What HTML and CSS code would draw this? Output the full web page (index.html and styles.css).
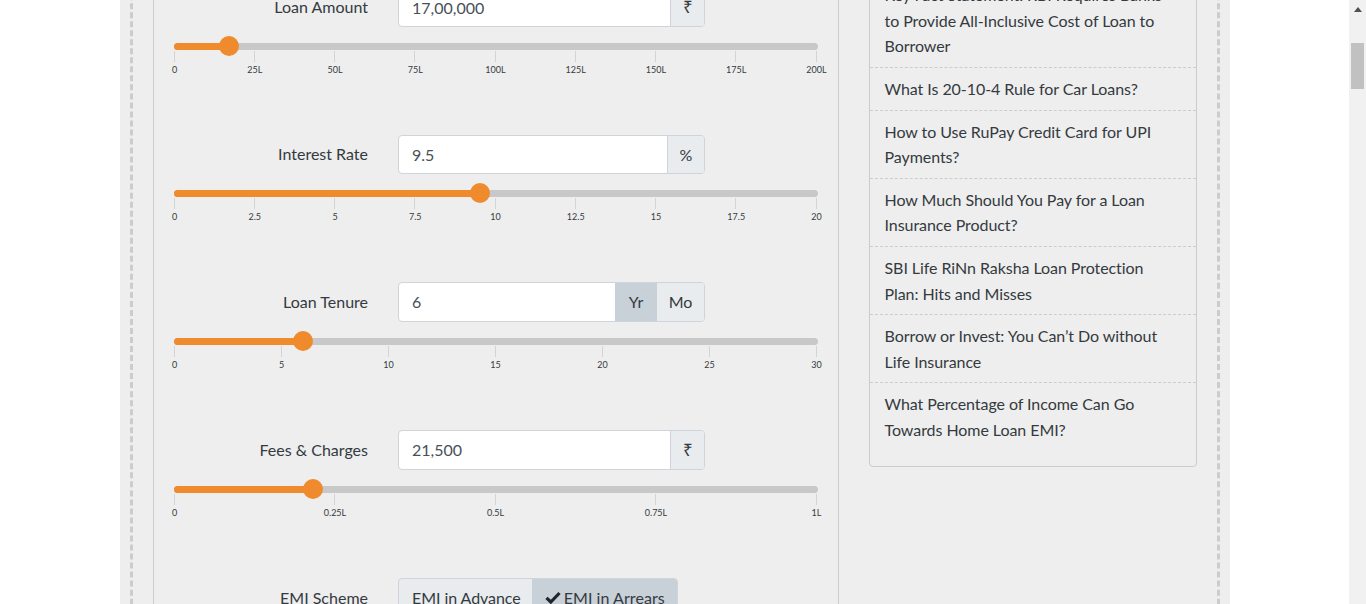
FILE: index.html
```html
<!DOCTYPE html>
<html lang="en">
<head>
    <meta charset="UTF-8">
    <meta name="viewport" content="width=device-width, initial-scale=1.0">
    <title>EMI Calculator</title>
    <link rel="stylesheet" href="styles.css">
</head>
<body>
    <div class="window">
        <div class="page">
            <div class="dashed-box">
                <main class="calc-card">
                    <section class="calc-row">
                        <div class="field">
                            <label class="field-label">Loan Amount</label>
                            <div class="input-group">
                                <span class="input-value">17,00,000</span>
                                <span class="addon rupee">₹</span>
                            </div>
                        </div>
                        <div class="slider">
                            <div class="track"><div class="fill" style="width: 8.5%"></div><span class="handle" style="left: 8.5%"></span></div>
                            <div class="scale">
                                <div class="tick">0</div><div class="tick">25L</div><div class="tick">50L</div><div class="tick">75L</div><div class="tick">100L</div><div class="tick">125L</div><div class="tick">150L</div><div class="tick">175L</div><div class="tick">200L</div>
                            </div>
                        </div>
                    </section>
                    <section class="calc-row">
                        <div class="field">
                            <label class="field-label">Interest Rate</label>
                            <div class="input-group">
                                <span class="input-value">9.5</span>
                                <span class="addon percent">%</span>
                            </div>
                        </div>
                        <div class="slider">
                            <div class="track"><div class="fill" style="width: 47.5%"></div><span class="handle" style="left: 47.5%"></span></div>
                            <div class="scale">
                                <div class="tick">0</div><div class="tick">2.5</div><div class="tick">5</div><div class="tick">7.5</div><div class="tick">10</div><div class="tick">12.5</div><div class="tick">15</div><div class="tick">17.5</div><div class="tick">20</div>
                            </div>
                        </div>
                    </section>
                    <section class="calc-row">
                        <div class="field">
                            <label class="field-label">Loan Tenure</label>
                            <div class="input-group tall">
                                <span class="input-value">6</span>
                                <span class="addon active unit">Yr</span>
                                <span class="addon unit">Mo</span>
                            </div>
                        </div>
                        <div class="slider">
                            <div class="track"><div class="fill" style="width: 20%"></div><span class="handle" style="left: 20%"></span></div>
                            <div class="scale">
                                <div class="tick">0</div><div class="tick">5</div><div class="tick">10</div><div class="tick">15</div><div class="tick">20</div><div class="tick">25</div><div class="tick">30</div>
                            </div>
                        </div>
                    </section>
                    <section class="calc-row">
                        <div class="field">
                            <label class="field-label">Fees &amp; Charges</label>
                            <div class="input-group tall">
                                <span class="input-value">21,500</span>
                                <span class="addon rupee">₹</span>
                            </div>
                        </div>
                        <div class="slider">
                            <div class="track"><div class="fill" style="width: 21.5%"></div><span class="handle" style="left: 21.5%"></span></div>
                            <div class="scale">
                                <div class="tick">0</div><div class="tick">0.25L</div><div class="tick">0.5L</div><div class="tick">0.75L</div><div class="tick">1L</div>
                            </div>
                        </div>
                    </section>
                    <section class="calc-row">
                        <div class="field">
                            <label class="field-label">EMI Scheme</label>
                            <div class="btn-group">
                                <span class="btn">EMI in Advance</span>
                                <span class="btn active">
                                    <svg class="check" viewBox="0 0 16 13"><path d="M1.5 6.8 L5.8 11 L14.5 2" fill="none" stroke="#212529" stroke-width="3.2"/></svg>EMI in Arrears
                                </span>
                            </div>
                        </div>
                    </section>
                </main>
                <aside class="side-card">
                    <ul class="side-list">
                        <li>Key Fact Statement: RBI Requires Banks to Provide All-Inclusive Cost of Loan to Borrower</li>
                        <li>What Is 20-10-4 Rule for Car Loans?</li>
                        <li>How to Use RuPay Credit Card for UPI Payments?</li>
                        <li>How Much Should You Pay for a Loan Insurance Product?</li>
                        <li>SBI Life RiNn Raksha Loan Protection Plan: Hits and Misses</li>
                        <li>Borrow or Invest: You Can’t Do without Life Insurance</li>
                        <li>What Percentage of Income Can Go Towards Home Loan EMI?</li>
                    </ul>
                </aside>
            </div>
        </div>
    </div>
    <div class="scrollbar">
        <svg class="scroll-arrow" viewBox="0 0 8 5"><path d="M4 0 L8 5 L0 5 Z" fill="#505050"/></svg>
        <div class="scroll-thumb"></div>
    </div>
</body>
</html>
```

FILE: styles.css
```css
* {
    box-sizing: border-box;
}

html,
body {
    height: 100%;
}

body {
    margin: 0;
    display: flex;
    overflow: hidden;
    background-color: #fff;
    font-family: Lato, "Open Sans", sans-serif;
    font-size: 16px;
    color: #343a40;
}

.window {
    flex: 1;
    height: 604px;
    overflow: hidden;
}

.page {
    width: 1110px;
    margin: 0 auto;
    padding: 0 10px;
    background-color: #eee;
}

.dashed-box {
    display: flex;
    align-items: flex-start;
    gap: 30px;
    margin-top: -60px;
    height: 800px;
    padding: 0 20px;
    border-left: 3px dashed #ccc;
    border-right: 3px dashed #ccc;
}

/* left column */
.calc-card {
    width: 686px;
    height: 800px;
    padding: 46.6px 20px 0;
    border: 1px solid #ccc;
}

.calc-row {
    margin-bottom: 59px;
}

.field {
    display: flex;
    align-items: center;
    gap: 30px;
}

.field-label {
    width: 194.5px;
    padding-bottom: 1px;
    text-align: right;
}

.input-group {
    display: flex;
    flex: none;
    width: 307px;
    height: 39px;
    overflow: hidden;
    background-color: #fff;
    border: 1px solid #ced4da;
    border-radius: 4px;
}

.input-group.tall {
    height: 40px;
}

.input-value {
    flex: 1;
    padding: 0 13px;
    line-height: 37px;
    color: #495057;
}

.input-group.tall .input-value {
    line-height: 38px;
}

.addon {
    display: flex;
    align-items: center;
    justify-content: center;
    background-color: #e9ecef;
}

.rupee {
    width: 34px;
    padding-bottom: 1px;
    border-left: 1px solid #ced4da;
    font-family: "Liberation Sans", sans-serif;
    font-size: 17px;
}

.percent {
    width: 37px;
    border-left: 1px solid #ced4da;
}

.unit {
    width: 47px;
}

.addon.active {
    width: 42px;
    background-color: #c8d0d8;
}

.btn-group {
    display: flex;
    overflow: hidden;
    height: 40px;
    border: 1px solid #ced4da;
    border-radius: 4px;
    background-color: #e9ecef;
}

.btn {
    display: flex;
    align-items: center;
    padding: 0 11px 0 13px;
    letter-spacing: -0.06px;
    white-space: nowrap;
}

.btn.active {
    padding: 0 12px 0 13px;
    letter-spacing: 0.06px;
    background-color: #c8d0d8;
}

.check {
    width: 16px;
    height: 13px;
    margin-right: 3px;
}

/* slider */
.slider {
    margin-top: 16px;
}

.track {
    position: relative;
    width: 644px;
    height: 7px;
    background-color: #c8c8c8;
    border-radius: 4px;
}

.fill {
    height: 7px;
    background-color: #ef8b2c;
    border-radius: 4px;
}

.handle {
    position: absolute;
    top: -6.5px;
    width: 20px;
    height: 20px;
    margin-left: -9px;
    background-color: #ef8b2c;
    border-radius: 50%;
}

.scale {
    display: flex;
    justify-content: space-between;
    width: 643px;
    margin-top: 1px;
}

.tick {
    display: flex;
    flex-direction: column;
    align-items: center;
    width: 1px;
    white-space: nowrap;
    font-size: 9px;
    line-height: 12px;
    text-indent: 1px;
}

.tick::before {
    content: "";
    flex: none;
    width: 1px;
    height: 11px;
    margin-bottom: 2px;
    background-color: #d4d4d4;
}

/* right column */
.side-card {
    width: 328px;
    margin-top: 33.3px;
    padding-bottom: 15px;
    border: 1px solid #ccc;
    border-radius: 4px;
}

.side-list {
    margin: 0;
    padding: 0;
    list-style: none;
}

.side-list li {
    padding: 8px 17px 8px 15px;
    line-height: 25.6px;
    letter-spacing: -0.06px;
    border-bottom: 1px dashed #ccc;
}

.side-list li:last-child {
    border-bottom: none;
}

/* browser scrollbar */
.scrollbar {
    flex: none;
    width: 17px;
    height: 604px;
    background-color: #f1f1f1;
}

.scroll-arrow {
    display: block;
    width: 8px;
    height: 5px;
    margin: 7px auto 31px;
}

.scroll-thumb {
    width: 13px;
    height: 46px;
    margin: 0 auto;
    background-color: #c1c1c1;
}
```
